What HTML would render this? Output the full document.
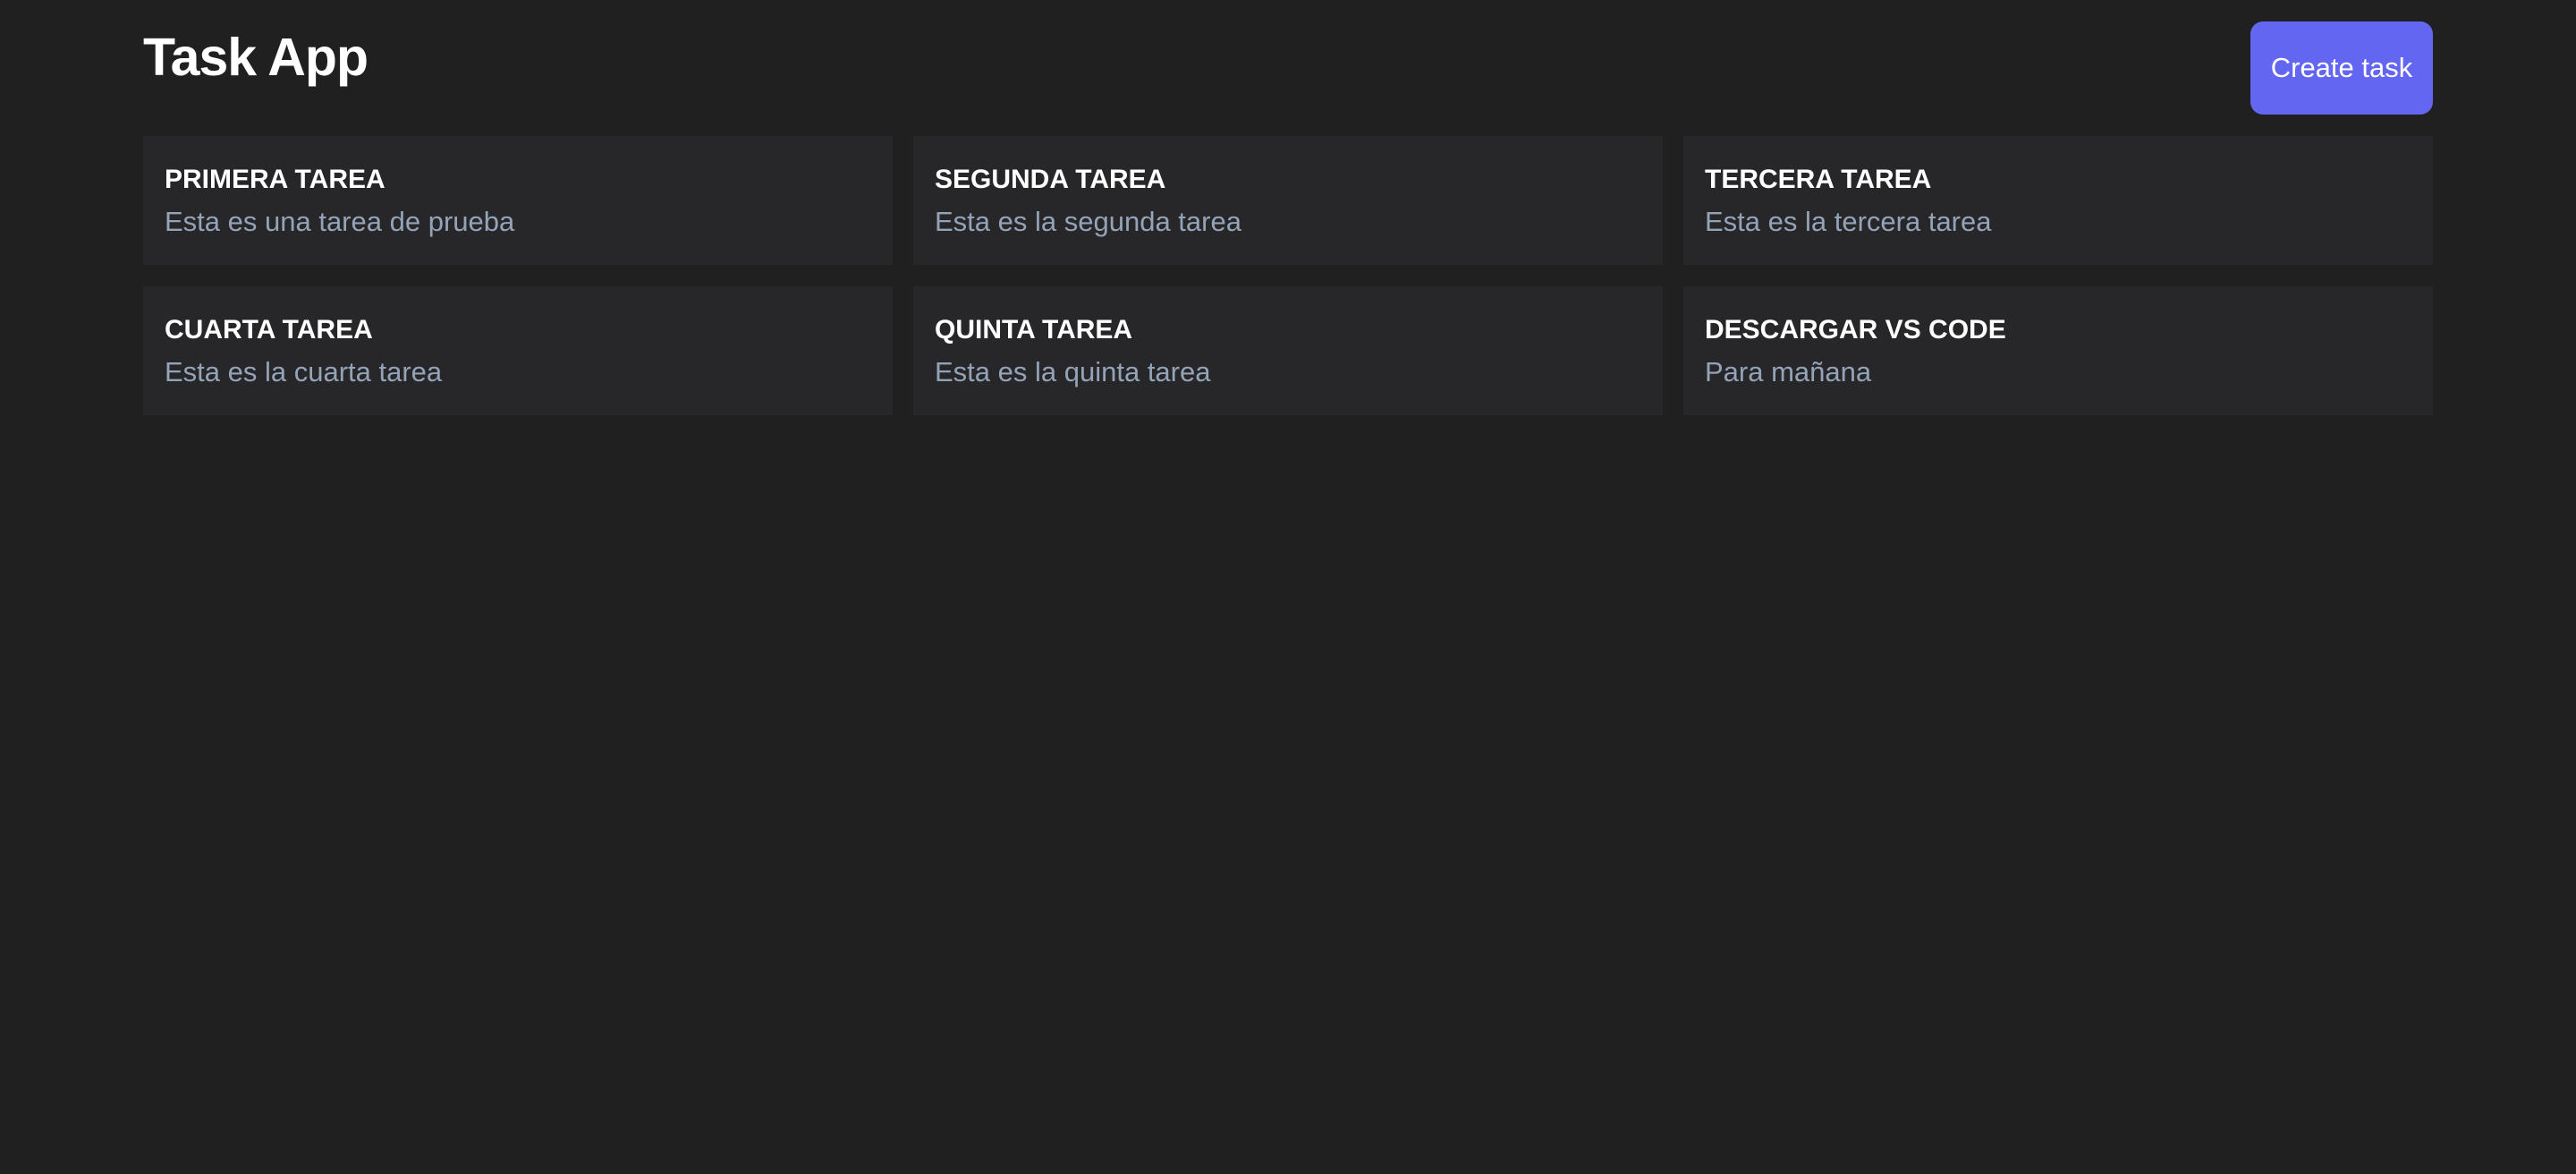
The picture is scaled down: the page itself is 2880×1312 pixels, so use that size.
<!DOCTYPE html>
<html><head><meta charset="utf-8"><style>
html,body{margin:0;padding:0;background:#202020;width:2880px;height:1312px;overflow:hidden;font-family:"Liberation Sans",sans-serif;}
h1{position:absolute;left:160px;top:29px;margin:0;color:#fff;font-size:59px;font-weight:bold;line-height:70px;letter-spacing:-1px;}
.btn{position:absolute;left:2516px;top:24px;width:204px;height:104px;background:#6366f1;border-radius:14px;color:#fff;font-size:31px;display:flex;align-items:center;justify-content:center;}
.card{position:absolute;width:838px;height:144px;background:#27272a;box-sizing:border-box;padding-left:24px;}
.t{position:absolute;left:24px;top:29px;color:#fff;font-weight:bold;font-size:30px;line-height:40px;}
.d{position:absolute;left:24px;top:76px;color:#94a3b8;font-size:31px;line-height:40px;}
</style></head><body>
<h1>Task App</h1>
<div class="btn">Create task</div>
<div class="card" style="left:160px;top:152px"><div class="t">PRIMERA TAREA</div><div class="d">Esta es una tarea de prueba</div></div>
<div class="card" style="left:1021px;top:152px"><div class="t">SEGUNDA TAREA</div><div class="d">Esta es la segunda tarea</div></div>
<div class="card" style="left:1882px;top:152px"><div class="t">TERCERA TAREA</div><div class="d">Esta es la tercera tarea</div></div>
<div class="card" style="left:160px;top:320px"><div class="t">CUARTA TAREA</div><div class="d">Esta es la cuarta tarea</div></div>
<div class="card" style="left:1021px;top:320px"><div class="t">QUINTA TAREA</div><div class="d">Esta es la quinta tarea</div></div>
<div class="card" style="left:1882px;top:320px"><div class="t">DESCARGAR VS CODE</div><div class="d">Para mañana</div></div>
</body></html>
